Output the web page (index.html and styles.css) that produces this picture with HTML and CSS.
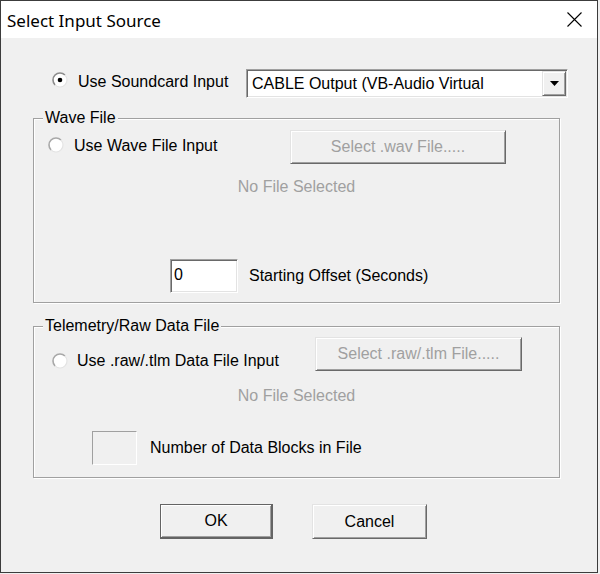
FILE: index.html
```html
<!DOCTYPE html>
<html>
<head>
<meta charset="utf-8">
<title>Select Input Source</title>
<link rel="stylesheet" href="styles.css">
</head>
<body>
<div class="window">
  <div class="titlebar">
    <span class="title">Select Input Source</span>
    <svg class="close" width="15" height="15" viewBox="0 0 15 15"><path d="M0.5 0.5 L14.5 14.5 M14.5 0.5 L0.5 14.5" stroke="#000" stroke-width="1.1" fill="none"/></svg>
  </div>
  <div class="content">
    <div class="row-sound">
      <svg class="radio r-sound" width="16" height="16" viewBox="0 0 16 16"><circle cx="8" cy="8" r="7" fill="#fff"/><path d="M3.05 12.95 A7 7 0 0 1 12.95 3.05" stroke="#8c8c8c" stroke-width="1.6" fill="none"/><path d="M12.95 3.05 A7 7 0 0 1 3.05 12.95" stroke="#e3e3e3" stroke-width="1.2" fill="none"/><circle cx="8" cy="8" r="2.3" fill="#000"/></svg>
      <span class="label l-sound">Use Soundcard Input</span>
      <div class="combo">
        <span class="combo-text">CABLE Output (VB-Audio Virtual</span>
        <span class="combo-btn"><svg width="9" height="5" viewBox="0 0 9 5"><path d="M0 0 H9 L4.5 5 Z" fill="#000"/></svg></span>
      </div>
    </div>

    <div class="group g-wave">
      <div class="group-title">Wave File</div>
      <div class="g-row r-wave">
        <svg class="radio rd-wave" width="16" height="16" viewBox="0 0 16 16"><circle cx="8" cy="8" r="7" fill="#fff"/><path d="M3.05 12.95 A7 7 0 0 1 12.95 3.05" stroke="#a8a8a8" stroke-width="1.6" fill="none"/><path d="M12.95 3.05 A7 7 0 0 1 3.05 12.95" stroke="#e3e3e3" stroke-width="1.2" fill="none"/></svg>
        <span class="label l-wave">Use Wave File Input</span>
        <div class="btn disabled b-wav">Select .wav File.....</div>
      </div>
      <div class="nofile nf-wave">No File Selected</div>
      <div class="g-row r-offset">
        <div class="edit">0</div>
        <span class="label l-offset">Starting Offset (Seconds)</span>
      </div>
    </div>

    <div class="group g-raw">
      <div class="group-title">Telemetry/Raw Data File</div>
      <div class="g-row r-raw">
        <svg class="radio rd-raw" width="16" height="16" viewBox="0 0 16 16"><circle cx="8" cy="8" r="7" fill="#fff"/><path d="M3.05 12.95 A7 7 0 0 1 12.95 3.05" stroke="#a8a8a8" stroke-width="1.6" fill="none"/><path d="M12.95 3.05 A7 7 0 0 1 3.05 12.95" stroke="#e3e3e3" stroke-width="1.2" fill="none"/></svg>
        <span class="label l-raw">Use .raw/.tlm Data File Input</span>
        <div class="btn disabled b-raw">Select .raw/.tlm File.....</div>
      </div>
      <div class="nofile nf-raw">No File Selected</div>
      <div class="g-row r-blocks">
        <div class="box"></div>
        <span class="label l-blocks">Number of Data Blocks in File</span>
      </div>
    </div>

    <div class="buttons">
      <div class="btn default b-ok">OK</div>
      <div class="btn b-cancel">Cancel</div>
    </div>
  </div>
</div>
</body>
</html>
```

FILE: styles.css
```css
html, body {
  margin: 0;
  padding: 0;
  background: #f0f0f0;
}

.window {
  width: 598px;
  height: 573px;
  box-sizing: border-box;
  border: 1px solid #3c3c3c;
  background: #f0f0f0;
  display: flex;
  flex-direction: column;
  font-family: "Liberation Sans", Arial, sans-serif;
  font-size: 16px;
  color: #000;
  overflow: hidden;
}

.titlebar {
  flex: none;
  height: 37px;
  background: #fff;
  display: flex;
  align-items: center;
}

.title {
  font-family: "Noto Sans", "Open Sans", sans-serif;
  font-size: 17px;
  margin-left: 6px;
  margin-top: 1px;
  color: #000;
}

.close {
  margin-left: auto;
  margin-right: 15px;
}

.content {
  padding-top: 31px;
}

.label {
  line-height: 18px;
  white-space: nowrap;
}

.radio {
  flex: none;
  display: block;
}

/* Soundcard row */
.row-sound {
  display: flex;
  align-items: center;
  height: 29px;
  padding-left: 51px;
}

.r-sound {
  margin-bottom: 7px;
}

.l-sound {
  margin-left: 10px;
  width: 168px;
  flex: none;
  margin-bottom: 4px;
}

.combo {
  flex: none;
  width: 322px;
  height: 29px;
  box-sizing: border-box;
  background: #fff;
  border-style: solid;
  border-width: 1px;
  border-color: #a0a0a0 #fff #fff #a0a0a0;
  box-shadow: inset 1px 1px #696969, inset -1px -1px #e3e3e3;
  display: flex;
  align-items: center;
  padding: 1px;
}

.combo-text {
  flex: 1;
  padding-left: 4px;
  line-height: 18px;
  white-space: nowrap;
  overflow: hidden;
}

.combo-btn {
  flex: none;
  width: 24px;
  height: 25px;
  box-sizing: border-box;
  background: #f0f0f0;
  border-style: solid;
  border-width: 1px;
  border-color: #e3e3e3 #696969 #696969 #e3e3e3;
  box-shadow: inset 1px 1px #fff, inset -1px -1px #a0a0a0;
  display: flex;
  align-items: center;
  justify-content: center;
}

/* Group boxes */
.group {
  margin-left: 32px;
  width: 527px;
  box-sizing: border-box;
  border: 1px solid #a0a0a0;
  box-shadow: inset 1px 1px #fff, 1px 1px #fff;
}

.g-wave {
  margin-top: 20px;
  padding-bottom: 9px;
}

.g-raw {
  margin-top: 23px;
  padding-bottom: 12px;
}

.group-title {
  width: fit-content;
  margin: -10px 0 -8px 9px;
  padding: 0 2px;
  line-height: 18px;
  background: #f0f0f0;
  white-space: nowrap;
}

.g-row {
  display: flex;
  align-items: center;
}

.r-wave {
  margin-top: 11px;
  height: 34px;
  padding-left: 14px;
}

.rd-wave {
  margin-bottom: 4px;
}

.l-wave {
  margin-left: 10px;
  width: 216px;
  flex: none;
  margin-bottom: 2px;
}

.btn {
  flex: none;
  box-sizing: border-box;
  background: #f0f0f0;
  border-style: solid;
  border-width: 1px;
  border-color: #e3e3e3 #696969 #696969 #e3e3e3;
  box-shadow: inset 1px 1px #fff, inset -1px -1px #a0a0a0;
  display: flex;
  align-items: center;
  justify-content: center;
  white-space: nowrap;
  line-height: 18px;
}

.btn.disabled {
  color: #a0a0a0;
}

.b-wav {
  width: 216px;
  height: 34px;
}

.nofile {
  text-align: center;
  line-height: 18px;
  color: #a0a0a0;
}

.nf-wave {
  margin-top: 14px;
}

.r-offset {
  margin-top: 63px;
  padding-left: 136px;
}

.edit {
  flex: none;
  width: 68px;
  height: 34px;
  box-sizing: border-box;
  background: #fff;
  border-style: solid;
  border-width: 1px;
  border-color: #a0a0a0 #fff #fff #a0a0a0;
  box-shadow: inset 1px 1px #696969, inset -1px -1px #e3e3e3;
  padding: 6px 0 0 3px;
  line-height: 18px;
}

.l-offset {
  margin-left: 11px;
}

/* Raw group */
.r-raw {
  margin-top: 10px;
  height: 34px;
  padding-left: 18px;
}

.rd-raw {
  margin-top: 14px;
}

.l-raw {
  margin-left: 9px;
  width: 238px;
  flex: none;
  margin-top: 14px;
}

.b-raw {
  width: 207px;
  height: 34px;
}

.nf-raw {
  margin-top: 16px;
}

.r-blocks {
  margin-top: 26px;
  padding-left: 58px;
}

.box {
  flex: none;
  width: 45px;
  height: 34px;
  box-sizing: border-box;
  border-style: solid;
  border-width: 1px;
  border-color: #a0a0a0 #fff #fff #a0a0a0;
}

.l-blocks {
  margin-left: 13px;
}

/* Bottom buttons */
.buttons {
  display: flex;
  margin-top: 26px;
  padding-left: 159px;
}

.btn.default {
  border-color: #646464;
  border-right-width: 2px;
  border-bottom-width: 2px;
  box-shadow: inset 1px 1px #fff, inset -1px -1px #a0a0a0;
}

.b-ok {
  width: 113px;
  height: 35px;
}

.b-cancel {
  width: 115px;
  height: 35px;
  margin-left: 39px;
}
```
